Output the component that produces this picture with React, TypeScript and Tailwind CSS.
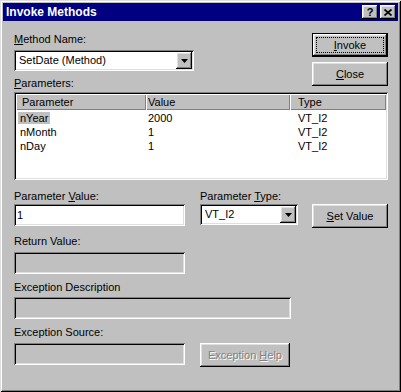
import type { ReactNode } from "react";

const RAISED =
  "shadow-[inset_-1px_-1px_#000,inset_1px_1px_#fff,inset_-2px_-2px_#808080,inset_2px_2px_#dfdfdf]";
const SUNKEN =
  "shadow-[inset_1px_1px_#808080,inset_-1px_-1px_#fff,inset_2px_2px_#000,inset_-2px_-2px_#dfdfdf]";

function Key({ children }: { children: ReactNode }) {
  return <span className="underline underline-offset-[1px]">{children}</span>;
}

function Label({ children, className = "" }: { children: ReactNode; className?: string }) {
  return <div className={`h-[13px] whitespace-nowrap ${className}`}>{children}</div>;
}

function DropArrow() {
  return (
    <div className={`flex h-[17px] w-[16px] shrink-0 items-center justify-center bg-[#c0c0c0] ${RAISED}`}>
      <svg width="7" height="4" viewBox="0 0 7 4">
        <path d="M0 0h7L3.5 4z" fill="#000" />
      </svg>
    </div>
  );
}

function Combo({ text, className = "" }: { text: string; className?: string }) {
  return (
    <div className={`flex h-[21px] items-center bg-white p-[2px] ${SUNKEN} ${className}`}>
      <span className="flex-1 pl-[3px] whitespace-nowrap">{text}</span>
      <DropArrow />
    </div>
  );
}

function Field({ value = "", disabled, className = "" }: { value?: string; disabled?: boolean; className?: string }) {
  return (
    <div
      className={`flex h-[22px] items-center px-[3px] ${SUNKEN} ${disabled ? "bg-[#c0c0c0]" : "bg-white"} ${className}`}
    >
      {value}
    </div>
  );
}

function Button({
  children,
  def,
  disabled,
  className = "",
}: {
  children: ReactNode;
  def?: boolean;
  disabled?: boolean;
  className?: string;
}) {
  const label = disabled ? (
    <span className="text-[#808080] [text-shadow:1px_1px_0_#fff]">{children}</span>
  ) : (
    children
  );
  if (def) {
    return (
      <div className={`flex h-[24px] w-[76px] border border-black ${className}`}>
        <div className={`flex flex-1 p-[3px] ${RAISED}`}>
          <div className="flex flex-1 items-center justify-center border border-dotted border-black">{label}</div>
        </div>
      </div>
    );
  }
  return (
    <div className={`flex h-[24px] w-[76px] items-center justify-center ${RAISED} ${className}`}>{label}</div>
  );
}

function TitleBtn({ children }: { children: ReactNode }) {
  return (
    <div className={`flex h-[14px] w-[16px] items-center justify-center bg-[#c0c0c0] ${RAISED}`}>{children}</div>
  );
}

const params = [
  { name: "nYear", value: "2000", type: "VT_I2" },
  { name: "nMonth", value: "1", type: "VT_I2" },
  { name: "nDay", value: "1", type: "VT_I2" },
];

export default function App() {
  return (
    <div className="h-[392px] w-[401px] bg-[#c0c0c0] p-[3px] font-['Liberation_Sans',Arial,sans-serif] text-[11px] leading-[13px] text-black shadow-[inset_1px_1px_#dfdfdf,inset_-1px_-1px_#000,inset_2px_2px_#fff,inset_-2px_-2px_#808080]">
      {/* title bar */}
      <div className="flex h-[18px] items-center bg-[#000080] pl-[3px] pr-[2px]">
        <span className="text-[12px] font-bold leading-[18px] text-white">Invoke Methods</span>
        <div className="ml-auto flex gap-[2px]">
          <TitleBtn>
            <span className="text-[11px] font-bold leading-[11px]">?</span>
          </TitleBtn>
          <TitleBtn>
            <svg width="8" height="7" viewBox="0 0 8 7">
              <path d="M0.5 0.5L7.5 6.5M7.5 0.5L0.5 6.5" stroke="#000" strokeWidth="1.7" />
            </svg>
          </TitleBtn>
        </div>
      </div>

      <div className="pl-[11px]">
        <div className="mt-[12px] flex">
          <div className="flex w-[180px] flex-col">
            <Label>
              <Key>M</Key>ethod Name:
            </Label>
            <Combo text="SetDate (Method)" className="mt-[4px]" />
            <Label className="mt-[6px]">
              <Key>P</Key>arameters:
            </Label>
          </div>
          <div className="ml-[118px] flex flex-col gap-[5px]">
            <Button def>
              <Key>I</Key>nvoke
            </Button>
            <Button>
              <Key>C</Key>lose
            </Button>
          </div>
        </div>

        {/* parameter list */}
        <div className={`mt-[2px] h-[88px] w-[374px] bg-white p-[2px] ${SUNKEN}`}>
          <div className="flex h-[16px]">
            <div className={`flex w-[130px] items-center bg-[#c0c0c0] pl-[6px] shadow-[inset_1px_1px_#fff,inset_-1px_-1px_#808080]`}>
              Parameter
            </div>
            <div className={`flex w-[144px] items-center bg-[#c0c0c0] pl-[2px] shadow-[inset_1px_1px_#fff,inset_-1px_-1px_#808080]`}>
              Value
            </div>
            <div className={`flex w-[96px] items-center bg-[#c0c0c0] pl-[8px] shadow-[inset_1px_1px_#fff,inset_-1px_-1px_#808080]`}>
              Type
            </div>
          </div>
          <div className="pt-[1px]">
            {params.map((p, i) => (
              <div key={p.name} className="flex h-[14px] items-center">
                <div className="w-[130px] pl-[2px]">
                  <span className={`px-[2px] ${i === 0 ? "bg-[#c0c0c0]" : ""}`}>{p.name}</span>
                </div>
                <div className="w-[144px] pl-[2px]">{p.value}</div>
                <div className="w-[96px] pl-[8px]">{p.type}</div>
              </div>
            ))}
          </div>
        </div>

        <div className="mt-[10px] flex">
          <div className="flex w-[171px] flex-col">
            <Label>
              Parameter <Key>V</Key>alue:
            </Label>
            <Field value="1" className="mt-[1px]" />
          </div>
          <div className="ml-[15px] flex w-[98px] flex-col">
            <Label>
              Parameter <Key>T</Key>ype:
            </Label>
            <Combo text="VT_I2" className="mt-[1px]" />
          </div>
          <Button className="ml-[14px] mt-[14px]">
            <Key>S</Key>et Value
          </Button>
        </div>

        <Label className="mt-[7px]">Return Value:</Label>
        <Field disabled className="mt-[4px] w-[171px]" />

        <Label className="mt-[7px]">Exception Description</Label>
        <Field disabled className="mt-[3px] w-[277px]" />

        <Label className="mt-[7px]">Exception Source:</Label>
        <div className="mt-[4px] flex">
          <Field disabled className="w-[171px]" />
          <Button disabled className="ml-[15px] h-[23px] w-[90px]">
            Exception <Key>H</Key>elp
          </Button>
        </div>
      </div>
    </div>
  );
}
